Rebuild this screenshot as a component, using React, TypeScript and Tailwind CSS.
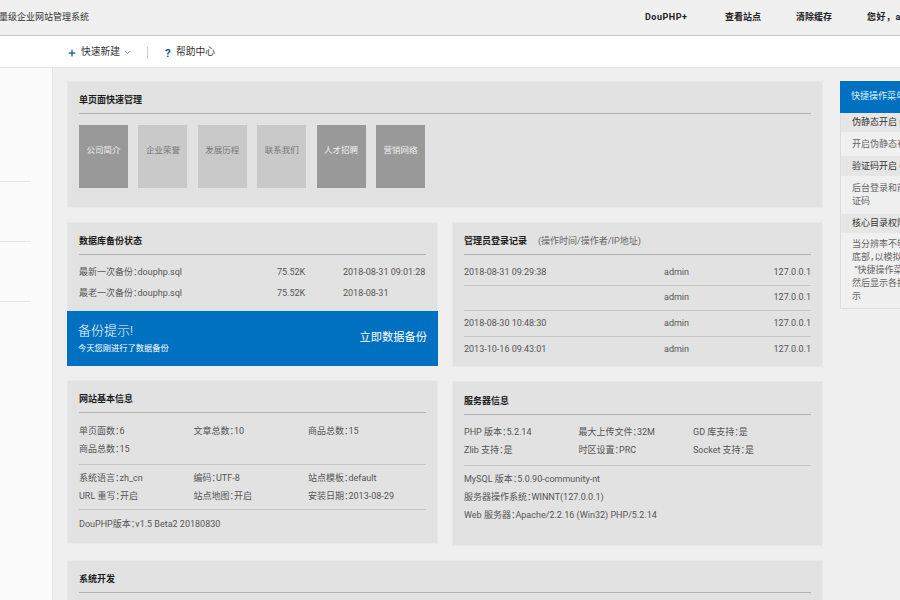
import React from 'react';
import { ChevronDown, Plus } from 'lucide-react';

const tiles = [
  { name: '公司简介', on: true },
  { name: '企业荣誉', on: false },
  { name: '发展历程', on: false },
  { name: '联系我们', on: false },
  { name: '人才招聘', on: true },
  { name: '营销网络', on: true },
];

const logins = [
  ['2018-08-31 09:29:38', 'admin', '127.0.0.1'],
  ['', 'admin', '127.0.0.1'],
  ['2018-08-30 10:48:30', 'admin', '127.0.0.1'],
  ['2013-10-16 09:43:01', 'admin', '127.0.0.1'],
];

const Panel = ({ className, children }: { className?: string; children: React.ReactNode }) => (
  <section className={`bg-[#e2e2e2] border border-[#e8e8e8] px-[11px] ${className ?? ''}`}>{children}</section>
);

const Title = ({ className, children }: { className?: string; children: React.ReactNode }) => (
  <h3 className={`h-[32px] pt-[10px] leading-[16px] font-bold text-[#1c1c1c] border-b border-[#b4b4b4] ${className ?? ''}`}>{children}</h3>
);

const Cells = ({ items }: { items: string[] }) => (
  <div className="grid grid-cols-[114.5px_114.5px_1fr]">
    {items.map((item, i) => (
      <div key={i} className="h-[18px] leading-[18px] whitespace-nowrap">
        {item}
      </div>
    ))}
  </div>
);

export default function App() {
  return (
    <div className="w-[900px] h-[600px] overflow-hidden bg-[#efefef] text-[9px] text-[#555] [font-feature-settings:'halt'] [font-family:'Roboto','Noto_Sans_CJK_SC',sans-serif]">
      <header className="h-[36px] bg-[#f0f0f0] border-b border-[#c4c4c4] flex items-center font-bold text-[#222]">
        <div className="w-[645px] shrink-0 -ml-[1px] mr-[1px] font-normal text-[#333]">量级企业网站管理系统</div>
        <nav className="flex gap-[35px] whitespace-nowrap [font-feature-settings:normal]">
          <span className="w-[45px] tracking-[0.5px]">DouPHP+</span>
          <span>查看站点</span>
          <span>清除缓存</span>
          <span className="tracking-[0.5px]">您好，admin</span>
        </nav>
      </header>

      <div className="h-[32px] bg-white border-b border-[#e4e4e4] flex items-center pt-[2px] pl-[67px] text-[#333] text-[9.75px]">
        <Plus className="w-[10px] h-[10px] text-[#0b5a85]" strokeWidth={3} />
        <span className="ml-[4px]">快速新建</span>
        <ChevronDown className="w-[9px] h-[9px] ml-[3px] text-[#777]" />
        <span className="ml-[15px] w-px h-[12px] bg-[#ccc]" />
        <span className="ml-[17px] w-[11px] text-[#0b5a85] font-bold text-[11.5px] leading-[12px]">?</span>
        <span>帮助中心</span>
      </div>

      <div className="flex">
        <aside className="w-[53px] h-[540px] shrink-0 bg-[#fbfbfb] border-r border-[#e6e6e6] pt-[54px]">
          <div className="w-[31px] h-[60px] border-b border-[#e4e4e4]" />
          <div className="w-[31px] h-[60px] border-b border-[#e4e4e4]" />
          <div className="w-[31px] h-[60px] border-b border-[#e4e4e4]" />
        </aside>

        <main className="w-[756px] shrink-0 ml-[14px] pt-[13px] flex flex-col gap-[14px]">
          <Panel className="h-[127px]">
            <Title>单页面快速管理</Title>
            <div className="flex gap-[10.4px] mt-[11px]">
              {tiles.map((t) => (
                <div
                  key={t.name}
                  className={`w-[49px] h-[63px] pt-[18px] text-center text-[8.5px] leading-[14px] ${t.on ? 'bg-[#999] text-[#f0f0f0]' : 'bg-[#c9c9c9] text-[#777]'}`}
                >
                  {t.name}
                </div>
              ))}
            </div>
          </Panel>

          <div className="grid grid-cols-[371px_371px] gap-x-[14px]">
            <section className="h-[144px] bg-[#e2e2e2] border border-[#e8e8e8] flex flex-col">
              <div className="px-[11px]">
                <Title>数据库备份状态</Title>
                <div className="mt-[7px] grid grid-cols-[198px_66px_1fr] leading-[21px] whitespace-nowrap">
                  <span>最新一次备份：douphp.sql</span>
                  <span>75.52K</span>
                  <span>2018-08-31 09:01:28</span>
                  <span>最老一次备份：douphp.sql</span>
                  <span>75.52K</span>
                  <span>2018-08-31</span>
                </div>
              </div>
              <div className="mt-auto -mx-px -mb-px h-[55px] bg-[#0070c0] text-white flex items-center justify-between px-[11px]">
                <div>
                  <div className="text-[13px] leading-[19px] font-light">备份提示!</div>
                  <div className="leading-[15px] mt-[1px] text-[8.25px]">今天您刚进行了数据备份</div>
                </div>
                <div className="text-[11.25px]">立即数据备份</div>
              </div>
            </section>

            <Panel className="h-[145px]">
              <Title>
                管理员登录记录<span className="ml-[11px] font-normal text-[#666]">(操作时间/操作者/IP地址)</span>
              </Title>
              <div className="pt-[5px]">
                {logins.map((row, i) => (
                  <div
                    key={i}
                    className={`h-[25.5px] grid grid-cols-[200px_1fr_auto] items-center ${i < 3 ? 'border-b border-[#c6c6c6]' : ''}`}
                  >
                    <span>{row[0]}</span>
                    <span>{row[1]}</span>
                    <span>{row[2]}</span>
                  </div>
                ))}
              </div>
            </Panel>
          </div>

          <div className="grid grid-cols-[371px_371px] gap-x-[14px] items-start">
            <Panel className="h-[164px] -mt-px">
              <Title>网站基本信息</Title>
              <div className="pt-[9px] pb-[6px] border-b border-[#c6c6c6]">
                <Cells items={['单页面数：6', '文章总数：10', '商品总数：15', '商品总数：15']} />
              </div>
              <div className="pt-[4px] pb-[4px] border-b border-[#c6c6c6]">
                <Cells items={['系统语言：zh_cn', '编码：UTF-8', '站点模板：default', 'URL 重写：开启', '站点地图：开启', '安装日期：2013-08-29']} />
              </div>
              <div className="pt-[5px] leading-[18px]">DouPHP版本：v1.5 Beta2 20180830</div>
            </Panel>

            <Panel className="h-[165px]">
              <Title className="h-[33px] pt-[11px]">服务器信息</Title>
              <div className="pt-[8px] pb-[6px] border-b border-[#c6c6c6]">
                <Cells items={['PHP 版本：5.2.14', '最大上传文件：32M', 'GD 库支持：是', 'Zlib 支持：是', '时区设置：PRC', 'Socket 支持：是']} />
              </div>
              <div className="pt-[4px] leading-[18px]">
                <div>MySQL 版本：5.0.90-community-nt</div>
                <div>服务器操作系统：WINNT(127.0.0.1)</div>
                <div>Web 服务器：Apache/2.2.16 (Win32) PHP/5.2.14</div>
              </div>
            </Panel>
          </div>

          <Panel className="h-[80px]">
            <Title>系统开发</Title>
          </Panel>
        </main>

        <aside className="w-[200px] shrink-0 ml-[17px] mt-[13px] self-start border border-[#dcdcdc] bg-[#f0f0f0] whitespace-nowrap">
          <div className="h-[32px] -mx-px -mt-px bg-[#0070c0] text-[#dff3ff] flex items-center pl-[11px]">快捷操作菜单</div>
          <div className="h-[19px] bg-[#e6e6e6] pl-[11px] leading-[19px] text-[#333]">伪静态开启 (必须)</div>
          <div className="h-[24px] pl-[11px] leading-[24px] text-[#666]">开启伪静态有利于搜索引擎优化</div>
          <div className="h-[20px] bg-[#e6e6e6] pl-[11px] leading-[20px] text-[#333]">验证码开启 (推荐)</div>
          <div className="h-[38px] pl-[11px] pt-[6px] leading-[13px] text-[#666]">
            <div>后台登录和前台留言开启验</div>
            <div>证码</div>
          </div>
          <div className="h-[19px] bg-[#e6e6e6] pl-[11px] leading-[19px] text-[#333]">核心目录权限</div>
          <div className="h-[75px] pl-[11px] pt-[5px] leading-[13px] text-[#666]">
            <div>当分辨率不够时请移至页面</div>
            <div>底部，以模拟点击</div>
            <div>&nbsp;“快捷操作菜单”按钮</div>
            <div>然后显示各按钮的操作提</div>
            <div>示</div>
          </div>
        </aside>
      </div>
    </div>
  );
}
